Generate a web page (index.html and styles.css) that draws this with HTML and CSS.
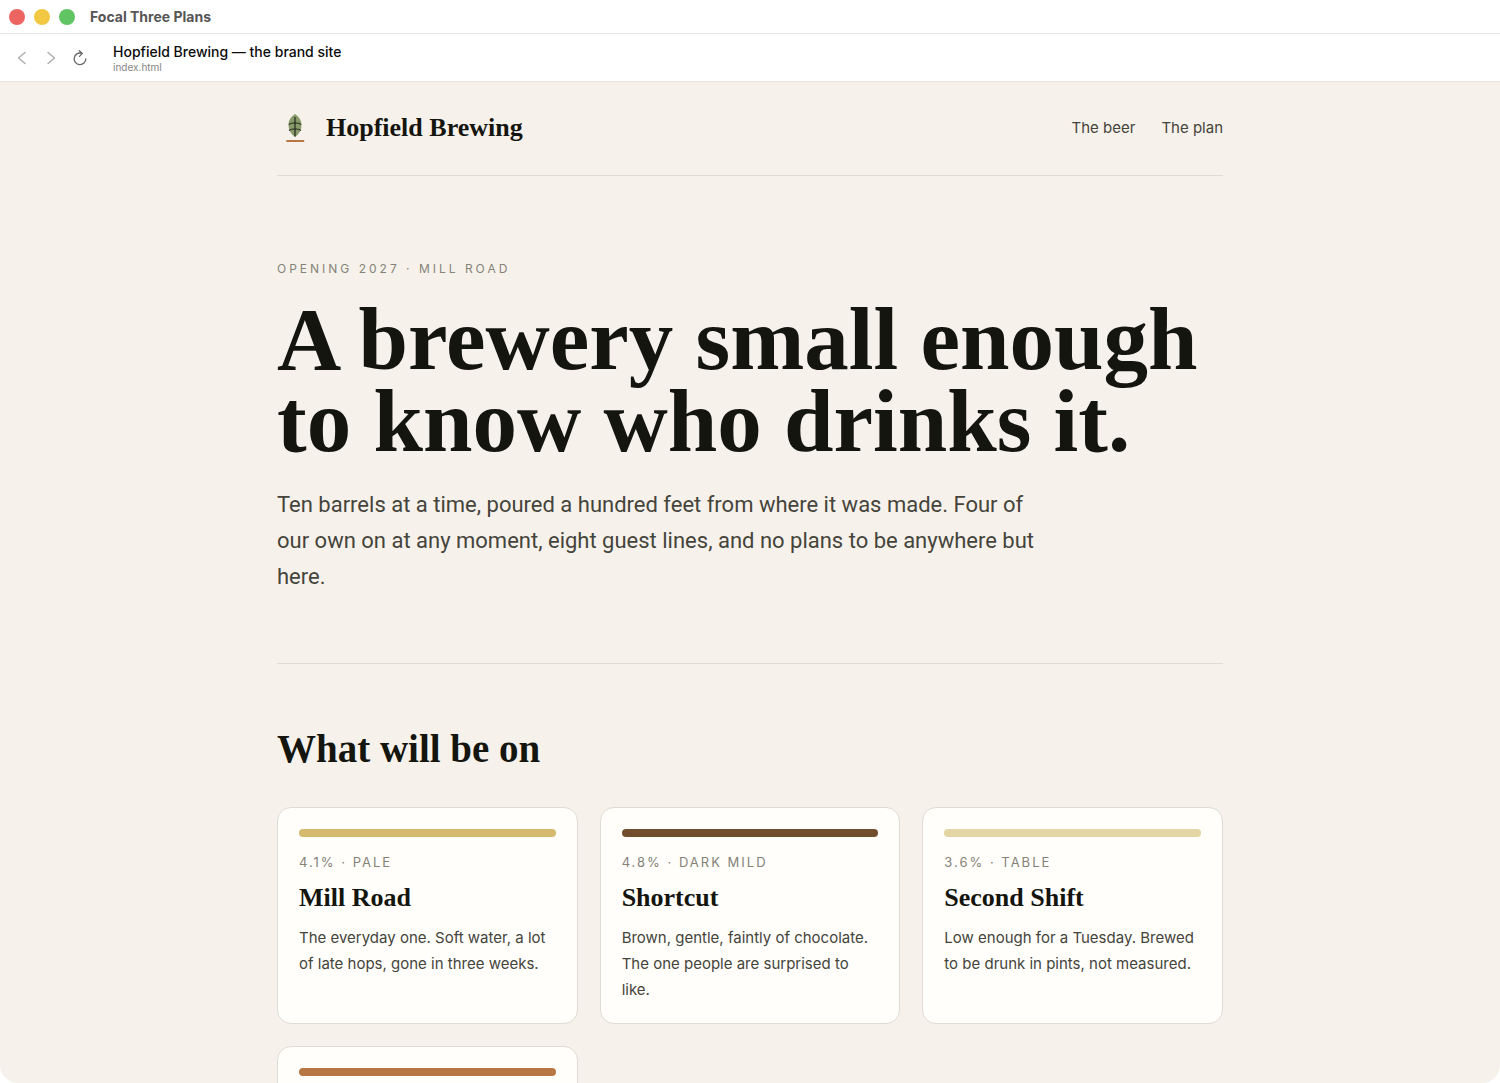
FILE: index.html
```html
<!DOCTYPE html>
<html lang="en">
<head>
    <meta charset="UTF-8">
    <meta name="viewport" content="width=device-width, initial-scale=1">
    <title>Hopfield Brewing — the brand site</title>
    <link rel="stylesheet" href="styles.css">
</head>
<body>
    <div class="window">
        <div class="titlebar">
            <button class="light close" aria-label="Close"></button>
            <button class="light minimize" aria-label="Minimize"></button>
            <button class="light expand" aria-label="Zoom"></button>
            <span class="window-title">Focal Three Plans</span>
        </div>

        <div class="toolbar">
            <button class="tool" aria-label="Back">
                <svg width="16" height="16" viewBox="0 0 16 16"><path d="M11 2.500 L4.500 8 L11 13.500"/></svg>
            </button>
            <button class="tool" aria-label="Forward">
                <svg width="16" height="16" viewBox="0 0 16 16"><path d="M5 2.500 L11.500 8 L5 13.500"/></svg>
            </button>
            <button class="tool reload" aria-label="Reload">
                <svg width="16" height="16" viewBox="0 0 16 16"><path d="M9.5 3.200 A5.800 5.800 0 1 0 13.800 8.800 M7.300 0.700 L10.300 3.400 L7.500 6.400"/></svg>
            </button>
            <div class="page-info">
                <div class="page-title">Hopfield Brewing — the brand site</div>
                <div class="page-file">index.html</div>
            </div>
        </div>

        <div class="page">
            <div class="wrap">
                <header class="site-header">
                    <div class="brand">
                        <svg width="36" height="36" viewBox="0 0 36 36" aria-hidden="true">
                            <path class="leaf" d="M18 4 C22.500 7 24.700 11 24.500 15.500 C24.300 20.500 22 24 18 27 C14 24 11.700 20.500 11.500 15.500 C11.300 11 13.500 7 18 4 Z"/>
                            <path class="veins" d="M18 7 V26.500 M12 14.500 Q15 12.300 18 13.300 Q21 12.300 24 14.500 M12 20.500 Q15 18.300 18 19.300 Q21 18.300 24 20.500"/>
                            <path class="ground" d="M10 31 H26.500"/>
                        </svg>
                        <span class="brand-name">Hopfield Brewing</span>
                    </div>
                    <nav>
                        <a href="#beer">The beer</a>
                        <a href="#plan">The plan</a>
                    </nav>
                </header>

                <section class="hero">
                    <p class="eyebrow">Opening 2027 · Mill Road</p>
                    <h1>A brewery small enough to know who drinks it.</h1>
                    <p class="lead">Ten barrels at a time, poured a hundred feet from where it was made. Four of our own on at any moment, eight guest lines, and no plans to be anywhere but here.</p>
                </section>

                <section class="beers" id="beer">
                    <h2>What will be on</h2>
                    <div class="grid">
                        <article class="card">
                            <div class="swatch pale"></div>
                            <p class="style">4.1% · Pale</p>
                            <h3>Mill Road</h3>
                            <p>The everyday one. Soft water, a lot of late hops, gone in three weeks.</p>
                        </article>
                        <article class="card">
                            <div class="swatch mild"></div>
                            <p class="style">4.8% · Dark mild</p>
                            <h3>Shortcut</h3>
                            <p>Brown, gentle, faintly of chocolate. The one people are surprised to like.</p>
                        </article>
                        <article class="card">
                            <div class="swatch table"></div>
                            <p class="style">3.6% · Table</p>
                            <h3>Second Shift</h3>
                            <p>Low enough for a Tuesday. Brewed to be drunk in pints, not measured.</p>
                        </article>
                        <article class="card">
                            <div class="swatch amber"></div>
                        </article>
                    </div>
                </section>
            </div>
        </div>
    </div>
</body>
</html>
```
FILE: styles.css
```css
* {
    box-sizing: border-box;
}
body {
    margin: 0;
    background: #fff;
    color: #15150f;
    font-family: Inter, "Liberation Sans", sans-serif;
}
h1, h2, h3, p {
    margin: 0;
}
h1, h2, h3, .brand-name {
    font-family: "Liberation Serif", serif;
    font-weight: 700;
}
button {
    border: none;
    padding: 0;
    background: none;
}

/* window chrome */
.window {
    display: flex;
    flex-direction: column;
    height: 100vh;
    overflow: hidden;
    border-radius: 0 0 18px 18px;
}
.titlebar {
    display: flex;
    align-items: center;
    gap: 9px;
    height: 34px;
    flex: none;
    padding: 0 9px;
    border-bottom: 1px solid #e6e6e6;
}
.light {
    width: 16px;
    height: 16px;
    border-radius: 50%;
}
.close {
    background: #ed6560;
}
.minimize {
    background: #f2c843;
}
.expand {
    background: #61c462;
}
.window-title {
    margin-left: 6px;
    font-size: 14px;
    font-weight: 700;
    color: #565656;
}
.toolbar {
    display: flex;
    align-items: center;
    height: 48px;
    flex: none;
    padding: 0 14px;
    gap: 13px;
    border-bottom: 1px solid #e5e4df;
}
.tool {
    width: 16px;
    height: 16px;
}
.tool svg {
    display: block;
    fill: none;
    stroke: #a9a9a9;
    stroke-width: 1.3;
    stroke-linecap: round;
    stroke-linejoin: round;
}
.reload svg {
    stroke: #666;
}
.page-info {
    margin-left: 12px;
}
.page-title {
    font-size: 14px;
    line-height: 18px;
    font-weight: 500;
    color: #0c0c0c;
}
.page-file {
    font-size: 10px;
    line-height: 12px;
    color: #858585;
}

/* brand site */
.page {
    flex: 1;
    min-height: 0;
    overflow: auto;
    scrollbar-width: none;
    background: #f6f2eb;
}
.wrap {
    max-width: 994px;
    margin: 0 auto;
    padding: 0 24px;
}
.site-header {
    display: flex;
    align-items: center;
    justify-content: space-between;
    padding: 28px 0 29px;
    border-bottom: 1px solid #e0dbd3;
}
.brand {
    display: flex;
    align-items: center;
    gap: 13px;
}
.brand-name {
    font-size: 26px;
    line-height: 36px;
}
.leaf {
    fill: #8a9a6b;
}
.veins {
    fill: none;
    stroke: #20281a;
    stroke-width: 1.2;
}
.ground {
    stroke: #b87844;
    stroke-width: 1.8;
    stroke-linecap: round;
}
nav {
    display: flex;
    gap: 26px;
}
nav a {
    font-size: 15px;
    line-height: 26px;
    color: #45443b;
    text-decoration: none;
}
.hero {
    padding: 84px 0 68px;
    border-bottom: 1px solid #e0dbd3;
}
.eyebrow {
    margin-bottom: 20px;
    font-size: 12px;
    line-height: 18px;
    letter-spacing: 3px;
    text-transform: uppercase;
    color: #858278;
}
h1 {
    font-size: 89px;
    line-height: 82px;
}
.lead {
    max-width: 770px;
    margin-top: 25px;
    font-family: Roboto, "Liberation Sans", sans-serif;
    font-size: 22px;
    line-height: 36px;
    color: #45443b;
}
.beers {
    padding: 61px 0;
}
h2 {
    margin-bottom: 34px;
    font-size: 39px;
    line-height: 48px;
}
.grid {
    display: grid;
    grid-template-columns: repeat(3, 1fr);
    gap: 22px;
}
.card {
    padding: 21px 21px 20px;
    border: 1px solid #e0dbd3;
    border-radius: 14px;
    background: #fffefa;
    font-size: 15px;
    line-height: 26px;
    color: #45443b;
}
.swatch {
    height: 8px;
    margin-bottom: 16px;
    border-radius: 4px;
}
.pale {
    background: #d4ba6e;
}
.mild {
    background: #714e2d;
}
.table {
    background: #e3d6a4;
}
.amber {
    background: #b87644;
}
.style {
    font-size: 13px;
    line-height: 18px;
    letter-spacing: 2px;
    text-transform: uppercase;
    color: #858278;
}
h3 {
    margin: 10px 0;
    font-size: 26px;
    line-height: 34px;
    color: #15150f;
}
```
